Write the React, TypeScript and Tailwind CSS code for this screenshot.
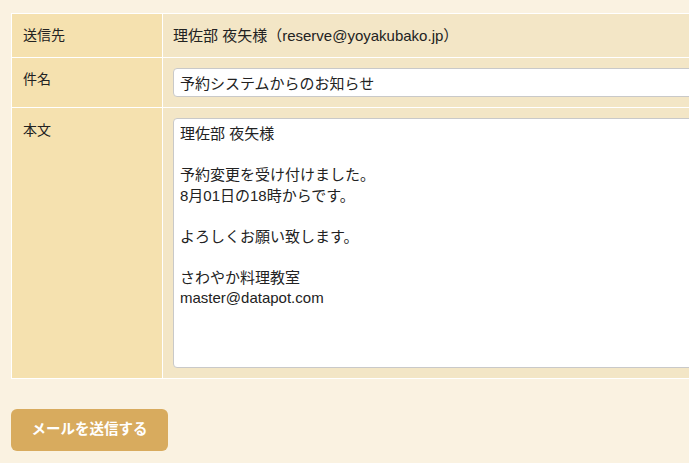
export default function App() {
  const body = `理佐部 夜矢様

予約変更を受け付けました。
8月01日の18時からです。

よろしくお願い致します。

さわやか料理教室
master@datapot.com`;

  return (
    <div
      className="h-[463px] w-[689px] overflow-hidden bg-[#faf2e1] pl-[11px] pt-[13px] text-[14px] text-[#222]"
      style={{ fontFamily: '"Liberation Sans", "Noto Sans CJK JP", sans-serif' }}
    >
      <table className="w-[760px] border-collapse border border-white">
        <tbody>
          <tr className="border-b border-white">
            <th className="w-[151px] border-r border-white bg-[#f5e1af] pl-[11px] pt-[11px] pb-[11px] text-left align-top font-normal leading-[21px]">
              送信先
            </th>
            <td className="bg-[#f3e6c6] px-[10px] py-[11px] text-[15px] leading-[21px]">
              理佐部 夜矢様（reserve@yoyakubako.jp）
            </td>
          </tr>
          <tr className="border-b border-white">
            <th className="border-r border-white bg-[#f5e1af] pl-[11px] pt-[11px] text-left align-top font-normal leading-[21px]">
              件名
            </th>
            <td className="bg-[#f3e6c6] p-[10px]">
              <input
                defaultValue="予約システムからのお知らせ"
                className="block h-[29px] w-full rounded-[4px] border border-[#c9c9c9] bg-white px-[6px] text-[15px] text-[#222] outline-none"
              />
            </td>
          </tr>
          <tr>
            <th className="border-r border-white bg-[#f5e1af] pl-[11px] pt-[12px] text-left align-top font-normal leading-[21px]">
              本文
            </th>
            <td className="bg-[#f3e6c6] p-[10px]">
              <textarea
                defaultValue={body}
                className="block h-[250px] w-full resize-none rounded-[4px] border border-[#c9c9c9] bg-white px-[6px] py-[5px] text-[15px] leading-[20.5px] text-[#222] outline-none"
              />
            </td>
          </tr>
        </tbody>
      </table>
      <button className="mt-[30px] h-[42px] w-[157px] rounded-[6px] bg-[#d8ab5e] text-[14.5px] font-bold text-white">
        メールを送信する
      </button>
    </div>
  );
}
